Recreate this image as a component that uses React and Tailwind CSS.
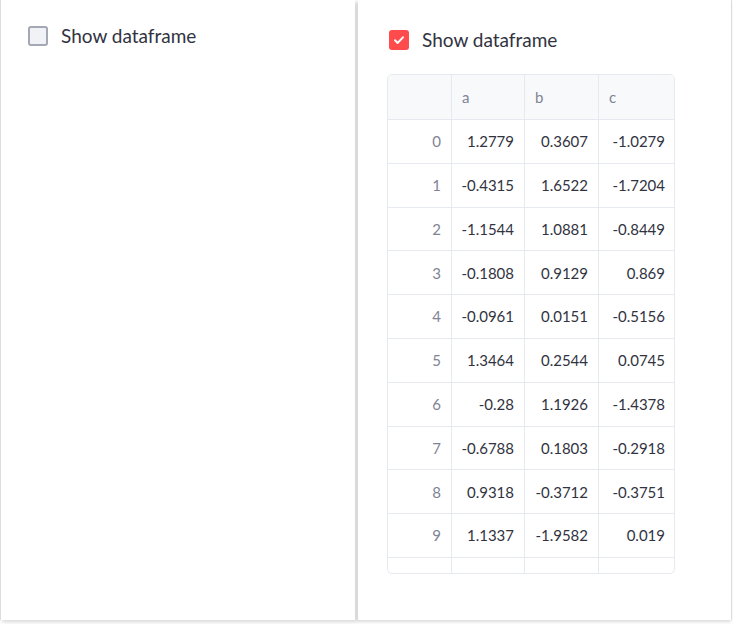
const rows = [
  ["1.2779", "0.3607", "-1.0279"],
  ["-0.4315", "1.6522", "-1.7204"],
  ["-1.1544", "1.0881", "-0.8449"],
  ["-0.1808", "0.9129", "0.869"],
  ["-0.0961", "0.0151", "-0.5156"],
  ["1.3464", "0.2544", "0.0745"],
  ["-0.28", "1.1926", "-1.4378"],
  ["-0.6788", "0.1803", "-0.2918"],
  ["0.9318", "-0.3712", "-0.3751"],
  ["1.1337", "-1.9582", "0.019"],
];

const font = { fontFamily: '"Lato", "Open Sans", sans-serif' };

const Checkbox = ({ checked }) =>
  checked ? (
    <span className="flex h-5 w-5 items-center justify-center rounded-[3px] bg-[#ff4b4b]">
      <svg viewBox="0 0 16 16" className="h-3.5 w-3.5" fill="none">
        <path
          d="M3.5 8.3l3 3 6-6.3"
          stroke="white"
          strokeWidth="2.4"
          strokeLinecap="round"
          strokeLinejoin="round"
        />
      </svg>
    </span>
  ) : (
    <span className="block h-5 w-5 rounded-[3px] border-2 border-[#a3a8b4] bg-[#f0f2f6]"></span>
  );

const cols = "grid grid-cols-[64px_73px_74px_76px]";

const App = () => {
  return (
    <div className="flex h-[624px] w-[734px] bg-white text-[#31333f]" style={font}>
      {/* Left panel */}
      <div className="h-[620px] w-[355px] border-l border-[#dcdcdc] bg-white shadow-[2px_2px_4px_rgba(0,0,0,0.16)]">
        <label className="mt-[26px] ml-[27px] flex items-center gap-[13px]">
          <Checkbox checked={false} />
          <span className="text-[19px] leading-5">Show dataframe</span>
        </label>
      </div>

      {/* Right panel */}
      <div className="ml-[3px] h-[620px] w-[374px] border-r border-[#dcdcdc] bg-white shadow-[-1px_2px_3px_rgba(0,0,0,0.14)]">
        <label className="mt-[30px] ml-[31px] flex items-center gap-[13px]">
          <Checkbox checked={true} />
          <span className="text-[19px] leading-5">Show dataframe</span>
        </label>

        <div className="mt-[24px] ml-[29px] h-[500px] w-[288px] overflow-hidden rounded-[5px] border border-[#e6e9ef] text-[15px]">
          <div className={`${cols} h-[45px] bg-[#f8f9fb] text-[#808495]`}>
            <div className="border-r border-b border-[#e6e9ef]"></div>
            <div className="flex items-center border-r border-b border-[#e6e9ef] px-[10px]">a</div>
            <div className="flex items-center border-r border-b border-[#e6e9ef] px-[10px]">b</div>
            <div className="flex items-center border-b border-[#e6e9ef] px-[10px]">c</div>
          </div>
          {rows.map((r, i) => (
            <div key={i} className={`${cols} h-[43.8px]`}>
              <div className="flex items-center justify-end border-r border-b border-[#e6e9ef] px-[10px] text-[#808495]">
                {i}
              </div>
              {r.map((v, j) => (
                <div
                  key={j}
                  className={`flex items-center justify-end border-b border-[#e6e9ef] px-[10px] ${
                    j < 2 ? "border-r" : ""
                  }`}
                >
                  {v}
                </div>
              ))}
            </div>
          ))}
          <div className={`${cols} h-[20px]`}>
            <div className="border-r border-[#e6e9ef]"></div>
            <div className="border-r border-[#e6e9ef]"></div>
            <div className="border-r border-[#e6e9ef]"></div>
            <div></div>
          </div>
        </div>
      </div>
    </div>
  );
};

export default App;
